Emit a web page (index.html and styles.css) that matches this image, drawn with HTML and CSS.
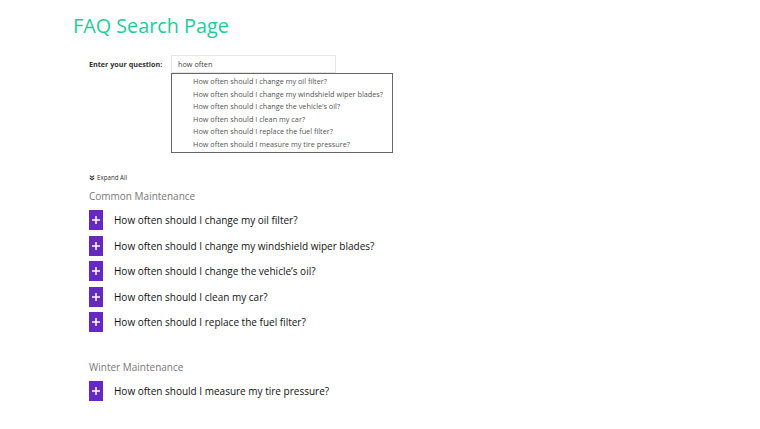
FILE: index.html
```html
<!DOCTYPE html>
<html>
<head>
<meta charset="utf-8">
<link rel="stylesheet" href="styles.css">
</head>
<body>
<div class="page">
  <h1 class="title">FAQ Search Page</h1>
  <div class="content">
    <div class="search">
      <label class="label">Enter your question:</label>
      <div class="field">
        <div class="input">how often</div>
        <ul class="suggest">
          <li>How often should I change my oil filter?</li>
          <li>How often should I change my windshield wiper blades?</li>
          <li>How often should I change the vehicle’s oil?</li>
          <li>How often should I clean my car?</li>
          <li>How often should I replace the fuel filter?</li>
          <li>How often should I measure my tire pressure?</li>
        </ul>
      </div>
    </div>
    <div class="expand"><svg class="chev" width="6" height="6" viewBox="0 0 6 6"><path d="M0.8 0.6 L3 2.4 L5.2 0.6 M0.8 3 L3 4.8 L5.2 3" fill="none" stroke="#333" stroke-width="1.1"/></svg><span>Expand All</span></div>
    <section class="group">
      <h2 class="group-title">Common Maintenance</h2>
      <div class="row"><span class="plus"><svg width="8" height="8" viewBox="0 0 8 8"><path d="M4 0 V8 M0 4 H8" stroke="#fff" stroke-width="1.5"/></svg></span><span class="q">How often should I change my oil filter?</span></div>
      <div class="row"><span class="plus"><svg width="8" height="8" viewBox="0 0 8 8"><path d="M4 0 V8 M0 4 H8" stroke="#fff" stroke-width="1.5"/></svg></span><span class="q">How often should I change my windshield wiper blades?</span></div>
      <div class="row"><span class="plus"><svg width="8" height="8" viewBox="0 0 8 8"><path d="M4 0 V8 M0 4 H8" stroke="#fff" stroke-width="1.5"/></svg></span><span class="q">How often should I change the vehicle’s oil?</span></div>
      <div class="row"><span class="plus"><svg width="8" height="8" viewBox="0 0 8 8"><path d="M4 0 V8 M0 4 H8" stroke="#fff" stroke-width="1.5"/></svg></span><span class="q">How often should I clean my car?</span></div>
      <div class="row"><span class="plus"><svg width="8" height="8" viewBox="0 0 8 8"><path d="M4 0 V8 M0 4 H8" stroke="#fff" stroke-width="1.5"/></svg></span><span class="q">How often should I replace the fuel filter?</span></div>
    </section>
    <section class="group winter">
      <h2 class="group-title">Winter Maintenance</h2>
      <div class="row"><span class="plus"><svg width="8" height="8" viewBox="0 0 8 8"><path d="M4 0 V8 M0 4 H8" stroke="#fff" stroke-width="1.5"/></svg></span><span class="q">How often should I measure my tire pressure?</span></div>
    </section>
  </div>
</div>
</body>
</html>
```
FILE: styles.css
```css
html, body { margin: 0; padding: 0; background: #fff; }
body { font-family: "Open Sans", "Noto Sans", sans-serif; color: #222; }
.page { padding: 12px 0 0 73px; }
.title { margin: 0; font-size: 19.8px; font-weight: 400; color: #1ccc9c; line-height: 28px; }
.content { padding-left: 16px; }
.search { display: flex; align-items: flex-start; margin-top: 15px; }
.label { font-size: 7.2px; font-weight: 700; color: #333; width: 82px; line-height: 18px; }
.field { position: relative; }
.input { width: 157px; height: 16px; border: 1px solid #e6e6e6; font-size: 7.3px; line-height: 16px; padding-left: 6px; color: #444; }
.suggest { position: absolute; left: 0; top: 18px; width: 220px; margin: 0; padding: 1px 0 1px 0; list-style: none; border: 1px solid #666; background: #fff; }
.suggest li { font-size: 7.3px; line-height: 12.6px; padding-left: 21px; color: #555; }
.expand { display: flex; align-items: center; margin-top: 100px; font-size: 6.2px; color: #333; line-height: 10px; }
.chev { margin-right: 2px; }
.group-title { margin: 5px 0 6px; font-size: 10px; font-weight: 400; color: #777; line-height: 16px; }
.row { display: flex; align-items: center; margin-bottom: 5.5px; }
.plus { width: 14px; height: 20px; background: #6528c2; display: flex; align-items: center; justify-content: center; }
.q { margin-left: 11px; font-size: 10px; color: #111; }
.winter { margin-top: 27px; }
```
